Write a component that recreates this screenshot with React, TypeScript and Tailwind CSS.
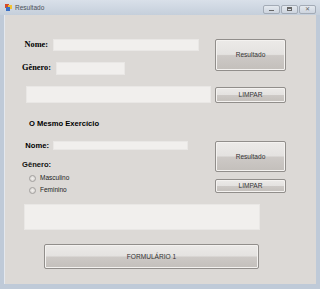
import React from "react";

const sans = { fontFamily: '"Liberation Sans", Arial, sans-serif' };
const serif = { fontFamily: '"Liberation Serif", "Times New Roman", serif' };

function WinButton({ label, className }: { label: string; className: string }) {
  return (
    <div
      className={`flex items-center justify-center rounded-[2px] border border-[#918e8b] bg-[linear-gradient(#eceae8_0%,#e4e2e0_48%,#cdc9c6_52%,#c3bfbb_100%)] text-[6.6px] text-[#333] shadow-[inset_0_0_0_1px_#f4f2f0] ${className}`}
      style={sans}
    >
      {label}
    </div>
  );
}

function TextBox({ className }: { className: string }) {
  return <div className={`border border-[#e9e7e5] bg-[#f1efed] ${className}`} />;
}

function Radio({ label }: { label: string }) {
  return (
    <div className="flex h-[8px] items-center gap-[4px] pl-[25px]">
      <span className="h-[7px] w-[7px] rounded-full border border-[#a2a09e] bg-[radial-gradient(#f2f0ee,#d0cdca)]" />
      <span className="text-[6.5px] text-[#222]" style={sans}>
        {label}
      </span>
    </div>
  );
}

function TitleBtn({ children }: { children: React.ReactNode }) {
  return (
    <div className="flex h-[9px] w-[17px] items-center justify-center rounded-[2px] border border-[#a3abb6] bg-[linear-gradient(#e4e9ef,#cdd4de)]">
      {children}
    </div>
  );
}

export default function App() {
  return (
    <div className="flex h-[289px] w-[320px] flex-col bg-[#bfcad8]">
      {/* title bar */}
      <div className="flex h-[15px] items-center bg-[linear-gradient(#d9e0e9,#c5cfdb)] pl-[5px] pr-[4px]">
        <svg width="7" height="7" viewBox="0 0 7 7">
          <rect x="0" y="0" width="4" height="4" fill="#d64b2b" />
          <rect x="3" y="1" width="4" height="4" fill="#f2c230" />
          <rect x="1" y="3" width="4" height="4" fill="#3a6fc4" />
        </svg>
        <span className="ml-[3px] text-[6.5px] text-[#4a4f58]" style={sans}>
          Resultado
        </span>
        <div className="ml-auto flex gap-[1px] pt-[3px]">
          <TitleBtn>
            <span className="mt-[2px] h-[1px] w-[5px] bg-[#666]" />
          </TitleBtn>
          <TitleBtn>
            <span className="h-[4px] w-[5px] border border-t-2 border-[#666]" />
          </TitleBtn>
          <TitleBtn>
            <span className="text-[6px] leading-none text-[#666]" style={sans}>
              ✕
            </span>
          </TitleBtn>
        </div>
      </div>

      {/* client area */}
      <div className="mx-[4px] mb-[5px] flex-1 bg-[#dcd9d6] shadow-[inset_1px_0_0_#e4e8ee]">
        {/* first block */}
        <div className="mt-[24px] flex">
          <div className="w-[211px]">
            <div className="flex h-[12px] items-center">
              <span className="w-[46px] pr-[2px] text-right text-[8.3px] font-bold text-black" style={serif}>
                Nome:
              </span>
              <TextBox className="ml-[3px] h-[12px] w-[146px]" />
            </div>
            <div className="mt-[11px] flex h-[13px] items-center">
              <span className="w-[47px] text-right text-[8.3px] font-bold text-black" style={serif}>
                Gênero:
              </span>
              <TextBox className="ml-[5px] h-[13px] w-[69px]" />
            </div>
            <TextBox className="ml-[22px] mt-[11px] h-[17px] w-[185px]" />
          </div>
          <div className="flex w-[71px] flex-col">
            <WinButton label="Resultado" className="h-[32px]" />
            <WinButton label="LIMPAR" className="mt-[16px] h-[16px]" />
          </div>
        </div>

        <div className="ml-[25px] mt-[16px] text-[7.6px] font-bold leading-[10px] text-black" style={sans}>
          O Mesmo Exercício
        </div>

        {/* second block */}
        <div className="mt-[12px] flex">
          <div className="w-[211px]">
            <div className="flex h-[9px] items-center">
              <span className="w-[45px] text-right text-[7.6px] font-bold text-black" style={sans}>
                Nome:
              </span>
              <TextBox className="ml-[4px] h-[9px] w-[135px]" />
            </div>
            <div className="ml-[18px] mt-[10px] text-[7.6px] font-bold leading-[10px] text-[#111]" style={sans}>
              Gênero:
            </div>
            <div className="mt-[4px]">
              <Radio label="Masculino" />
            </div>
            <div className="mt-[4px]">
              <Radio label="Feminino" />
            </div>
          </div>
          <div className="flex w-[71px] flex-col">
            <WinButton label="Resultado" className="h-[31px]" />
            <WinButton label="LIMPAR" className="mt-[7px] h-[14px]" />
          </div>
        </div>

        <TextBox className="ml-[20px] mt-[10px] h-[26px] w-[236px]" />

        <WinButton label="FORMULÁRIO 1" className="ml-[40px] mt-[14px] h-[25px] w-[215px]" />
      </div>
    </div>
  );
}
